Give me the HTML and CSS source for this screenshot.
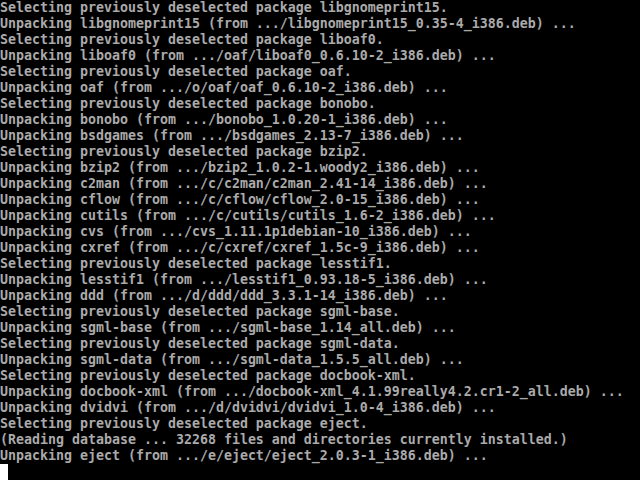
FILE: index.html
```html
<!DOCTYPE html>
<html>
<head>
<meta charset="utf-8">
<link rel="stylesheet" href="styles.css">
</head>
<body>
<pre class="console">Selecting previously deselected package libgnomeprint15.
Unpacking libgnomeprint15 (from .../libgnomeprint15_0.35-4_i386.deb) ...
Selecting previously deselected package liboaf0.
Unpacking liboaf0 (from .../oaf/liboaf0_0.6.10-2_i386.deb) ...
Selecting previously deselected package oaf.
Unpacking oaf (from .../o/oaf/oaf_0.6.10-2_i386.deb) ...
Selecting previously deselected package bonobo.
Unpacking bonobo (from .../bonobo_1.0.20-1_i386.deb) ...
Unpacking bsdgames (from .../bsdgames_2.13-7_i386.deb) ...
Selecting previously deselected package bzip2.
Unpacking bzip2 (from .../bzip2_1.0.2-1.woody2_i386.deb) ...
Unpacking c2man (from .../c/c2man/c2man_2.41-14_i386.deb) ...
Unpacking cflow (from .../c/cflow/cflow_2.0-15_i386.deb) ...
Unpacking cutils (from .../c/cutils/cutils_1.6-2_i386.deb) ...
Unpacking cvs (from .../cvs_1.11.1p1debian-10_i386.deb) ...
Unpacking cxref (from .../c/cxref/cxref_1.5c-9_i386.deb) ...
Selecting previously deselected package lesstif1.
Unpacking lesstif1 (from .../lesstif1_0.93.18-5_i386.deb) ...
Unpacking ddd (from .../d/ddd/ddd_3.3.1-14_i386.deb) ...
Selecting previously deselected package sgml-base.
Unpacking sgml-base (from .../sgml-base_1.14_all.deb) ...
Selecting previously deselected package sgml-data.
Unpacking sgml-data (from .../sgml-data_1.5.5_all.deb) ...
Selecting previously deselected package docbook-xml.
Unpacking docbook-xml (from .../docbook-xml_4.1.99really4.2.cr1-2_all.deb) ...
Unpacking dvidvi (from .../d/dvidvi/dvidvi_1.0-4_i386.deb) ...
Selecting previously deselected package eject.
(Reading database ... 32268 files and directories currently installed.)
Unpacking eject (from .../e/eject/eject_2.0.3-1_i386.deb) ...
<span class="cursor"></span></pre>
</body>
</html>
```

FILE: styles.css
```css
html, body {
  margin: 0;
  padding: 0;
  background: #000;
  width: 640px;
  height: 480px;
  overflow: hidden;
}
.console {
  margin: 0;
  padding: 0;
  color: #aaaaaa;
  font-family: "DejaVu Sans Mono", "Liberation Mono", monospace;
  font-size: 13.29px;
  line-height: 16px;
  font-weight: bold;
  white-space: pre;
}
.cursor {
  display: inline-block;
  width: 8px;
  height: 16px;
  background: #ffffff;
  vertical-align: top;
}
```
